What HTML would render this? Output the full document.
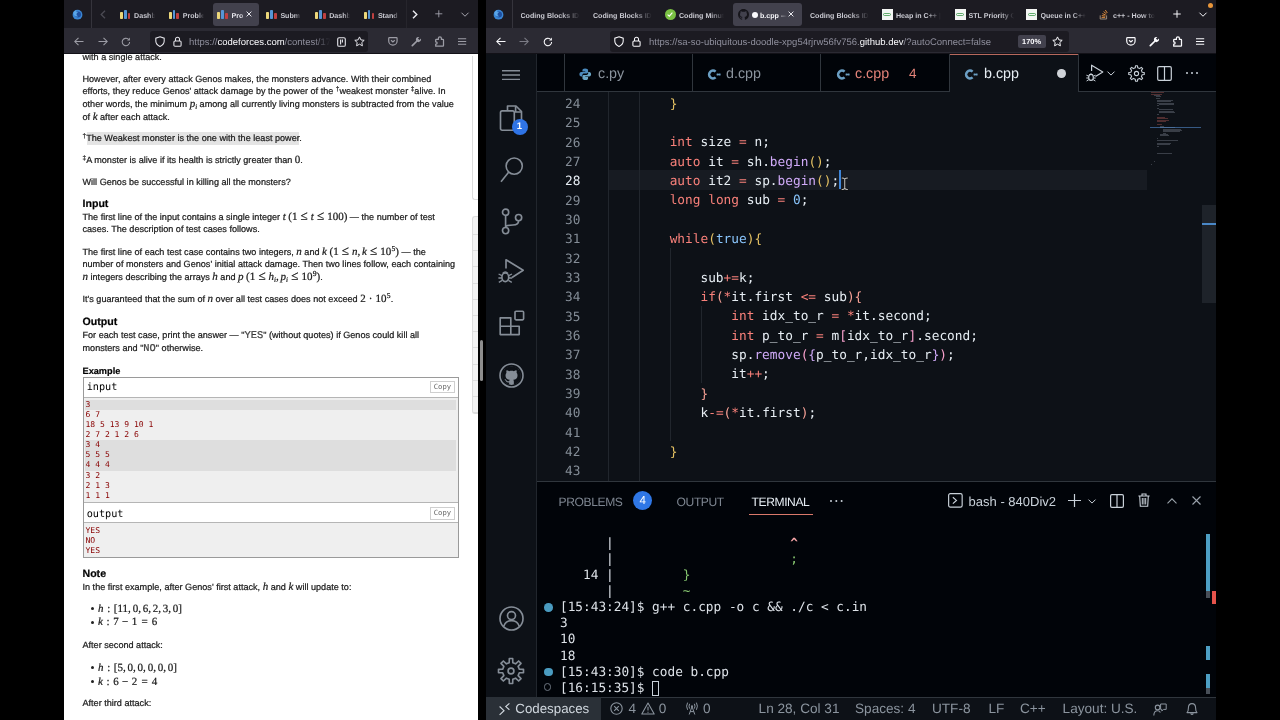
<!DOCTYPE html>
<html lang="en">
<head>
<meta charset="utf-8">
<title>Screen</title>
<style>
*{box-sizing:border-box;margin:0;padding:0;text-rendering:geometricPrecision}
html,body{width:1280px;height:720px;overflow:hidden;background:#000}
body{position:relative;font-family:"Liberation Sans",sans-serif;-webkit-font-smoothing:antialiased}
.abs{position:absolute}
svg{position:absolute;overflow:visible}
/* ---------- generic firefox chrome ---------- */
.win{position:absolute;top:0;height:720px;overflow:hidden;will-change:transform}
.tabbar{position:absolute;left:0;top:0;right:0;height:28px;background:#1c1b22}
.navbar{position:absolute;left:0;top:28px;right:0;height:26px;background:#2b2a33;border-bottom:1px solid #121117}
.tabtxt{position:absolute;top:9.9px;height:12px;line-height:12px;font-size:7.1px;font-weight:700;color:#c9c9d1;white-space:nowrap;overflow:hidden}
.fade{-webkit-mask-image:linear-gradient(90deg,#000 70%,transparent 100%);mask-image:linear-gradient(90deg,#000 70%,transparent 100%)}
.acttab{position:absolute;top:3px;height:23px;background:#42414d;border-radius:3px}
.urlbar{position:absolute;top:3px;height:20.5px;background:#1c1b22;border-radius:3px}
.urltxt{position:absolute;top:.8px;height:21px;line-height:21px;font-size:9.5px;color:#8f8f9d;white-space:nowrap;overflow:hidden}
.fade2{-webkit-mask-image:linear-gradient(90deg,#000 88%,transparent 100%);mask-image:linear-gradient(90deg,#000 88%,transparent 100%)}
.urltxt b{font-weight:400;color:#fbfbfe}
/* ---------- left page ---------- */
#lpage{position:absolute;left:0;top:54px;width:414px;height:666px;background:#fff;overflow:hidden;color:#222}
.ln{position:absolute;left:18.5px;height:13px;line-height:13px;font-size:9.1px;white-space:nowrap;color:#1a1a1a;-webkit-text-stroke:.22px #1a1a1a}
.ln i,.m{font-family:"Liberation Serif",serif;font-style:italic;font-size:11px}
.mr{font-family:"Liberation Serif",serif;font-size:11px}
.mr b.r{font-weight:400;margin:0 3.1px;font-size:13px;line-height:0}.mr b.c{margin-left:1.8px}.mr b.e{font-weight:400;margin:0 3.6px}.mr b.q{font-weight:400;margin:0 4.2px}.mr b.bn{font-weight:400;margin:0 3.4px}
u.bu{display:inline-block;width:3.2px;height:3.2px;border-radius:50%;background:#222;margin-right:3.6px;position:relative;top:-1.6px;text-decoration:none}.mr b.d{font-weight:400;margin:0 3.1px}
.mr sup.s{font-size:7.6px;top:-4px;margin-left:.3px}
.hd{font-weight:700;font-size:10.6px;color:#000}
.tt{font-family:"Liberation Mono",monospace;font-size:10.4px;color:#555}
sup.s{font-size:6.5px;vertical-align:baseline;position:relative;top:-3.5px}
sub.s{font-size:7px;vertical-align:baseline;position:relative;top:2px;font-family:"Liberation Serif",serif;font-style:italic}
.sm{font-family:"DejaVu Sans Mono","Liberation Mono",monospace;font-size:10.2px;line-height:14px;color:#000}
.cp{font-family:"DejaVu Sans Mono","Liberation Mono",monospace;font-size:7.2px;line-height:10.500px;height:12.300px;padding:0 2.600px;border:1px solid #cfcfcf;color:#666;background:#fff}
.io{font-family:"DejaVu Sans Mono","Liberation Mono",monospace;font-size:8.05px;line-height:10.05px;color:#880000}
/* ---------- vscode ---------- */
#vs{position:absolute;left:0;top:54px;width:730px;height:666px;background:#0d1117;overflow:hidden}
.code{font-family:"DejaVu Sans Mono","Liberation Mono",monospace;font-size:12.8px;white-space:pre;color:#e6edf3}
.cl{position:absolute;left:122px;height:19.33px;line-height:19.33px}
.lnum{position:absolute;left:40px;width:54.5px;text-align:right;height:19.33px;line-height:19.33px;color:#6e7681;font-family:"DejaVu Sans Mono","Liberation Mono",monospace;font-size:12.8px}
.k{color:#f8807a}.f{color:#d0aaf8}.n{color:#8ac6fd}
.b3{color:#e4c163}.b4{color:#f7a196}.b5{color:#f9a0cd}.b6{color:#d0aaf8}
.ui{font-family:"Liberation Sans",sans-serif;white-space:nowrap;position:absolute}
.tl{position:absolute;left:74px;height:16.1px;line-height:16.1px;font-family:"DejaVu Sans Mono","Liberation Mono",monospace;font-size:12.75px;white-space:pre;color:#dde2e8}
</style>
</head>
<body>

<!-- ================= LEFT WINDOW ================= -->
<div class="win" id="lw" style="left:64px;width:414px">
  <div class="tabbar">
<svg style="left:7.5px;top:8.5px" width="11" height="11" viewBox="0 0 11 11"><circle cx="5.500" cy="5.700" r="4.900" fill="#3a86d4"/><circle cx="6" cy="5.400" r="3" fill="#1f4f9f"/><path d="M1.400 3.400 Q2.400 1.200 4.800 .9 Q3.700 2 4.200 3.100 Q5.400 3 6.200 3.800 Q4.800 3.900 4.500 5 Q4.300 6.600 6 7.200 Q4 7.900 2.600 6.600 Q1 5.200 1.400 3.400Z" fill="#5aa6e8"/></svg>
<div class="abs" style="left:27px;top:0;width:1px;height:28px;background:#35343c"></div>
<svg style="left:36px;top:9.5px" width="6" height="9" viewBox="0 0 6 9"><path d="M5 .7 L1.200 4.500 L5 8.300" fill="none" stroke="#4b4a53" stroke-width="1.300"/></svg>
<div class="acttab" style="left:148.5px;width:46.5px"></div>
<div class="abs" style="left:55.9px;top:12.4px;width:3px;height:6.4px;background:#ecd77a;border-radius:.8px"></div><div class="abs" style="left:59.8px;top:10.4px;width:2.8px;height:8.4px;background:#5596d6;border-radius:.8px"></div><div class="abs" style="left:63.699999999999996px;top:13px;width:2.8px;height:5.8px;background:#bf4040;border-radius:.8px"></div>
<div class="tabtxt fade" style="left:70.1px;width:21px">Dashb</div>
<div class="abs" style="left:104.6px;top:12.4px;width:3px;height:6.4px;background:#ecd77a;border-radius:.8px"></div><div class="abs" style="left:108.5px;top:10.4px;width:2.8px;height:8.4px;background:#5596d6;border-radius:.8px"></div><div class="abs" style="left:112.39999999999999px;top:13px;width:2.8px;height:5.8px;background:#bf4040;border-radius:.8px"></div>
<div class="tabtxt fade" style="left:118.8px;width:21px">Proble</div>
<div class="abs" style="left:153.4px;top:12.4px;width:3px;height:6.4px;background:#ecd77a;border-radius:.8px"></div><div class="abs" style="left:157.3px;top:10.4px;width:2.8px;height:8.4px;background:#5596d6;border-radius:.8px"></div><div class="abs" style="left:161.20000000000002px;top:13px;width:2.8px;height:5.8px;background:#bf4040;border-radius:.8px"></div>
<div class="tabtxt fade" style="left:167.6px;width:13px;color:#e8e8ee">Pro</div>
<svg style="left:181.8px;top:11.2px" width="6" height="6" viewBox="0 0 6 6"><path d="M.6 .6 L5.4 5.4 M5.4 .6 L.6 5.4" stroke="#e8e8ee" stroke-width="1" fill="none"/></svg>
<div class="abs" style="left:202.2px;top:12.4px;width:3px;height:6.4px;background:#ecd77a;border-radius:.8px"></div><div class="abs" style="left:206.1px;top:10.4px;width:2.8px;height:8.4px;background:#5596d6;border-radius:.8px"></div><div class="abs" style="left:210.0px;top:13px;width:2.8px;height:5.8px;background:#bf4040;border-radius:.8px"></div>
<div class="tabtxt fade" style="left:216.39999999999998px;width:21px">Subm</div>
<div class="abs" style="left:251px;top:12.4px;width:3px;height:6.4px;background:#ecd77a;border-radius:.8px"></div><div class="abs" style="left:254.9px;top:10.4px;width:2.8px;height:8.4px;background:#5596d6;border-radius:.8px"></div><div class="abs" style="left:258.8px;top:13px;width:2.8px;height:5.8px;background:#bf4040;border-radius:.8px"></div>
<div class="tabtxt fade" style="left:265.2px;width:21px">Dashb</div>
<div class="abs" style="left:299.7px;top:12.4px;width:3px;height:6.4px;background:#ecd77a;border-radius:.8px"></div><div class="abs" style="left:303.59999999999997px;top:10.4px;width:2.8px;height:8.4px;background:#5596d6;border-radius:.8px"></div><div class="abs" style="left:307.5px;top:13px;width:2.8px;height:5.8px;background:#bf4040;border-radius:.8px"></div>
<div class="tabtxt fade" style="left:313.9px;width:21px">Stand</div>
<div class="abs" style="left:342px;top:0;width:1px;height:28px;background:#26252c"></div>
<svg style="left:348px;top:9.5px" width="6" height="9" viewBox="0 0 6 9"><path d="M1 .7 L4.800 4.500 L1 8.300" fill="none" stroke="#ececf2" stroke-width="1.400"/></svg>
<svg style="left:371.2px;top:10.200px" width="7.600" height="7.600" viewBox="0 0 9 9"><path d="M4.5 .3 V8.7 M.3 4.5 H8.7" fill="none" stroke="#a9a9b3" stroke-width="1"/></svg>
<svg style="left:397px;top:11.800px" width="8" height="5.300" viewBox="0 0 9 6"><path d="M.5 .8 L4.5 4.8 L8.5 .8" fill="none" stroke="#a9a9b3" stroke-width="1.1"/></svg>
</div>
  <div class="navbar">
<svg style="left:10px;top:9px" width="10" height="9" viewBox="0 0 10 9"><path d="M9.5 4.5 H1 M4.5 .8 L.8 4.5 L4.5 8.2" fill="none" stroke="#9d9da6" stroke-width="1.05"/></svg>
<svg style="left:33.5px;top:9px" width="10" height="9" viewBox="0 0 10 9"><path d="M.5 4.5 H9 M5.5 .8 L9.2 4.5 L5.5 8.2" fill="none" stroke="#9d9da6" stroke-width="1.05"/></svg>
<svg style="left:57px;top:8.5px" width="10" height="10" viewBox="0 0 10 10"><path d="M8.6 5 A3.7 3.7 0 1 1 7.3 2.2" fill="none" stroke="#9d9da6" stroke-width="1.05"/><path d="M8.9 .6 V3.4 H6.1Z" fill="#9d9da6"/></svg>
<div class="urlbar" style="left:85.5px;width:218px"><svg style="left:5px;top:5px" width="10" height="11" viewBox="0 0 10 11"><path d="M5 .7 L9.2 2.2 V5 Q9.2 8.6 5 10.4 Q.8 8.6 .8 5 V2.2Z" fill="none" stroke="#e6e6ec" stroke-width="1.05"/></svg><svg style="left:23.5px;top:4.5px" width="9" height="11" viewBox="0 0 9 11"><rect x=".9" y="4.9" width="7.2" height="5.4" rx="1.1" fill="none" stroke="#e6e6ec" stroke-width="1.05"/><path d="M2.5 4.9 V3.2 A2 2 0 0 1 6.5 3.2 V4.9" fill="none" stroke="#e6e6ec" stroke-width="1.05"/></svg><div class="urltxt fade2" style="left:39.5px;width:142px"><span>https://</span><b>codeforces.com</b>/contest/1786/problem</div><svg style="left:187.0px;top:5.5px" width="9" height="10" viewBox="0 0 9 10"><rect x=".7" y=".7" width="7.6" height="8.6" rx="1.4" fill="none" stroke="#e6e6ec" stroke-width="1.1"/><path d="M3.6 2.6 V7.4 M5.4 2.6 V5.6" stroke="#e6e6ec" stroke-width="1.1" fill="none"/></svg><svg style="left:204.0px;top:5px" width="11" height="11" viewBox="0 0 11 11"><path d="M5.5 .9 L6.9 3.9 L10.2 4.3 L7.8 6.5 L8.4 9.8 L5.5 8.2 L2.6 9.8 L3.2 6.5 L.8 4.3 L4.1 3.9Z" fill="none" stroke="#e6e6ec" stroke-width="1" stroke-linejoin="round"/></svg></div>
<svg style="left:324.1px;top:9px" width="9.800" height="8.900" viewBox="0 0 11 10"><path d="M1.6 .8 H9.4 Q10.2 .8 10.2 1.6 V4.4 A4.7 4.7 0 0 1 .8 4.4 V1.6 Q.8 .8 1.6 .8Z" fill="none" stroke="#9d9da6" stroke-width="1.350"/><path d="M3.4 3.6 L5.5 5.6 L7.6 3.6" fill="none" stroke="#9d9da6" stroke-width="1.350"/></svg>
<svg style="left:346.5px;top:8px" width="11" height="11" viewBox="0 0 11 11"><path d="M1.3 9.7 L6 5" stroke="#9d9da6" stroke-width="1.7" stroke-linecap="round" fill="none"/><path d="M9.9 2.6 L8.4 4.1 L6.9 2.6 L8.4 1.1 A2.6 2.6 0 1 0 9.9 2.6Z" fill="#9d9da6"/></svg>
<svg style="left:369.5px;top:6.600px" width="11" height="12" viewBox="0 0 11 12"><path d="M1.700 11.200 H8.900 Q9.500 11.200 9.500 10.600 V5 Q9.500 4.400 8.900 4.400 H7.400 V3.300 A1.500 1.500 0 0 0 4.400 3.300 V4.400 H2.300 Q1.700 4.400 1.700 5 V6.900 H2.100 A1.050 1.050 0 0 1 2.100 9 H1.700Z" fill="none" stroke="#9d9da6" stroke-width="1.250" stroke-linejoin="round"/></svg>
<svg style="left:393.9px;top:9.8px" width="8.200" height="7" viewBox="0 0 8.200 7"><path d="M0 .7 H8.200 M0 3.450 H8.200 M0 6.200 H8.200" stroke="#9d9da6" stroke-width="1.100" fill="none"/></svg>
</div>
  <div id="lpage">
<div class="ln" style="top:-3.00px">with a single attack.</div>
<div class="ln" style="top:18.50px">However, after every attack Genos makes, the monsters advance. With their combined</div>
<div class="ln" style="top:31.25px">efforts, they reduce Genos' attack damage by the power of the <sup class="s">†</sup>weakest monster <sup class="s">‡</sup>alive. In</div>
<div class="ln" style="top:44.00px">other words, the minimum <i>p</i><sub class="s">i</sub> among all currently living monsters is subtracted from the value</div>
<div class="ln" style="top:56.75px">of <i>k</i> after each attack.</div>
<div class="abs" style="left:23px;top:77.5px;width:212px;height:13px;background:#e4e4e4"></div>
<div class="ln" style="top:78.00px"><sup class="s">†</sup>The Weakest monster is the one with the least power.</div>
<div class="ln" style="top:100.00px"><sup class="s">‡</sup>A monster is alive if its health is strictly greater than <span class="mr">0</span>.</div>
<div class="ln" style="top:121.50px">Will Genos be successful in killing all the monsters?</div>
<div class="ln hd" style="top:143.50px">Input</div>
<div class="ln" style="top:156.50px">The first line of the input contains a single integer <i>t</i> <span class="mr" id="m1">(1<b class="r">≤</b><i>t</i><b class="r">≤</b>100)</span> — the number of test</div>
<div class="ln" style="top:169.25px">cases. The description of test cases follows.</div>
<div class="ln" style="top:191.50px">The first line of each test case contains two integers, <i>n</i> and <i>k</i> <span class="mr" id="m2">(1<b class="r">≤</b><i>n</i>,<b class="c"></b><i>k</i><b class="r">≤</b>10<sup class="s">5</sup>)</span> <span id="m2b">— the</span></div>
<div class="ln" style="top:204.25px">number of monsters and Genos' initial attack damage. Then two lines follow, each containing</div>
<div class="ln" style="top:217.00px"><i>n</i> integers describing the arrays <i>h</i> and <i>p</i> <span class="mr" id="m3">(1<b class="r">≤</b><i>h</i><sub class="s">i</sub>,<b class="c"></b><i>p</i><sub class="s">i</sub><b class="r">≤</b>10<sup class="s">9</sup>)</span>.</div>
<div class="ln" style="top:239.00px">It's guaranteed that the sum of <i>n</i> over all test cases does not exceed <span class="mr" id="m4">2<b class="d">·</b>10<sup class="s">5</sup></span>.</div>
<div class="ln hd" style="top:261.50px">Output</div>
<div class="ln" style="top:274.50px">For each test case, print the answer — <span id="q1">"<span class="tt">YES</span>"</span> <span id="q2">(without quotes) if Genos could kill all</span></div>
<div class="ln" style="top:287.90px">monsters and <span id="q3">"<span class="tt">NO</span>"</span> otherwise.</div>
<div class="ln hd" style="top:311.00px;font-size:9.2px">Example</div>
<!-- sample box -->
<div class="abs" style="left:18.5px;top:323px;width:376px;height:181px;border:1px solid #9a9a9a;background:#fff"></div>
<div class="abs" style="left:19.5px;top:342.7px;width:374px;height:106.6px;background:#efefef;border-top:1px solid #b5b5b5;border-bottom:1px solid #b5b5b5"></div>
<div class="abs" style="left:21px;top:345.5px;width:371px;height:10.2px;background:#dedede"></div>
<div class="abs" style="left:21px;top:386px;width:371px;height:30.5px;background:#dedede"></div>
<div class="abs" style="left:19.5px;top:467.5px;width:374px;height:35.5px;background:#efefef;border-top:1px solid #b5b5b5"></div>
<div class="abs sm" style="left:22.7px;top:327.3px">input</div>
<div class="abs sm" style="left:22.7px;top:453.8px">output</div>
<div class="abs cp" style="left:366.2px;top:327.2px">Copy</div>
<div class="abs cp" style="left:366.2px;top:453.4px">Copy</div>
<pre class="abs io" style="left:21.5px;top:346.2px">3
6 7
18 5 13 9 10 1
2 7 2 1 2 6
3 4
5 5 5
4 4 4
3 2
2 1 3
1 1 1</pre>
<pre class="abs io" style="left:21.5px;top:471.6px">YES
NO
YES</pre>
<div class="ln hd" style="top:514.00px">Note</div>
<div class="ln" style="top:526.50px">In the first example, after Genos' first attack, <i>h</i> and <i>k</i> will update to:</div>
<div class="ln" style="top:548.50px;left:27.3px"><u class="bu"></u><i>h</i><span class="mr" id="n1"><b class="e">:</b>[11,<b class="c"></b>0,<b class="c"></b>6,<b class="c"></b>2,<b class="c"></b>3,<b class="c"></b>0]</span></div>
<div class="ln" style="top:562.30px;left:27.3px"><u class="bu"></u><i>k</i><span class="mr" id="n2"><b class="e">:</b>7<b class="bn">−</b>1<b class="q">=</b>6</span></div>
<div class="ln" style="top:585.00px">After second attack:</div>
<div class="ln" style="top:607.50px;left:27.3px"><u class="bu"></u><i>h</i><span class="mr" id="n3"><b class="e">:</b>[5,<b class="c"></b>0,<b class="c"></b>0,<b class="c"></b>0,<b class="c"></b>0,<b class="c"></b>0]</span></div>
<div class="ln" style="top:621.50px;left:27.3px"><u class="bu"></u><i>k</i><span class="mr" id="n4"><b class="e">:</b>6<b class="bn">−</b>2<b class="q">=</b>4</span></div>
<div class="ln" style="top:643.00px">After third attack:</div>
<!-- right sidebar slivers -->
<div class="abs" style="left:407.5px;top:162px;width:7px;height:198px;background:#f3f3f3;border-left:1px solid #dcdcdc;border-top:1px solid #dcdcdc;border-bottom:1px solid #dcdcdc;border-radius:3px 0 0 3px"></div>
<div class="abs" style="left:408.5px;top:180.0px;width:6px;height:1px;background:#dcdcdc"></div>
<div class="abs" style="left:408.5px;top:196.2px;width:6px;height:1px;background:#dcdcdc"></div>
<div class="abs" style="left:408.5px;top:212.4px;width:6px;height:1px;background:#dcdcdc"></div>
<div class="abs" style="left:408.5px;top:228.6px;width:6px;height:1px;background:#dcdcdc"></div>
<div class="abs" style="left:408.5px;top:244.8px;width:6px;height:1px;background:#dcdcdc"></div>
<div class="abs" style="left:408.5px;top:261.0px;width:6px;height:1px;background:#dcdcdc"></div>
<div class="abs" style="left:408.5px;top:277.2px;width:6px;height:1px;background:#dcdcdc"></div>
<div class="abs" style="left:408.5px;top:293.4px;width:6px;height:1px;background:#dcdcdc"></div>
<div class="abs" style="left:408.5px;top:309.6px;width:6px;height:1px;background:#dcdcdc"></div>
<div class="abs" style="left:408.5px;top:325.8px;width:6px;height:1px;background:#dcdcdc"></div>
<div class="abs" style="left:408.5px;top:342.0px;width:6px;height:1px;background:#dcdcdc"></div>
<div class="abs" style="left:408.5px;top:358.2px;width:6px;height:1px;background:#dcdcdc"></div>
<div class="abs" style="left:407.5px;top:2px;width:7px;height:144px;border-left:1px solid #dcdcdc;border-bottom:1px solid #dcdcdc;border-radius:0 0 0 3px"></div>
</div>
</div>

<div class="abs" style="left:480.2px;top:339.5px;width:2.800px;height:41px;border-radius:1.500px;background:#8e8e8e"></div>
<!-- ================= RIGHT WINDOW ================= -->
<div class="win" id="rw" style="left:486px;width:730px">
  <div class="tabbar">
<svg style="left:6.5px;top:8.5px" width="11" height="11" viewBox="0 0 11 11"><circle cx="5.500" cy="5.700" r="4.900" fill="#3a86d4"/><circle cx="6" cy="5.400" r="3" fill="#1f4f9f"/><path d="M1.400 3.400 Q2.400 1.200 4.800 .9 Q3.700 2 4.200 3.100 Q5.400 3 6.200 3.800 Q4.800 3.900 4.500 5 Q4.300 6.600 6 7.200 Q4 7.900 2.600 6.600 Q1 5.200 1.400 3.400Z" fill="#5aa6e8"/></svg>
<div class="abs" style="left:26px;top:0;width:1px;height:28px;background:#35343c"></div>
<div class="acttab" style="left:246.5px;width:69.5px"></div>
<div class="tabtxt fade" style="left:34.5px;width:59px">Coding Blocks IDE</div>
<div class="tabtxt fade" style="left:107px;width:59px">Coding Blocks IDE</div>
<div class="abs" style="left:178.5px;top:9px;width:11px;height:11px;border-radius:50%;background:#7ac143"></div><svg style="left:181px;top:11.8px" width="6" height="5" viewBox="0 0 6 5"><path d="M.6 2.6 L2.3 4.2 L5.4 .7" fill="none" stroke="#fff" stroke-width="1.1"/></svg>
<div class="tabtxt fade" style="left:193px;width:45px">Coding Minutes</div>
<svg style="left:251.5px;top:9px" width="11" height="11" viewBox="0 0 16 16"><path fill="#16151b" d="M8 0C3.58 0 0 3.58 0 8c0 3.54 2.29 6.53 5.47 7.59.4.07.55-.17.55-.38 0-.19-.01-.82-.01-1.49-2.01.37-2.53-.49-2.69-.94-.09-.23-.48-.94-.82-1.13-.28-.15-.68-.52-.01-.53.63-.01 1.08.58 1.23.82.72 1.21 1.87.87 2.33.66.07-.52.28-.87.51-1.07-1.78-.2-3.64-.89-3.64-3.95 0-.87.31-1.59.82-2.15-.08-.2-.36-1.02.08-2.12 0 0 .67-.21 2.2.82.64-.18 1.32-.27 2-.27s1.36.09 2 .27c1.53-1.04 2.2-.82 2.2-.82.44 1.1.16 1.92.08 2.12.51.56.82 1.27.82 2.15 0 3.07-1.87 3.75-3.65 3.95.29.25.54.73.54 1.48 0 1.07-.01 1.93-.01 2.2 0 .21.15.46.55.38A8.01 8.01 0 0 0 16 8c0-4.42-3.58-8-8-8Z"/></svg>
<div class="abs" style="left:266px;top:11.5px;width:6px;height:6px;border-radius:50%;background:#fbfbfe"></div>
<div class="tabtxt fade" style="left:274px;width:27px;color:#f4f4f8">b.cpp — 840</div>
<svg style="left:302px;top:11.2px" width="6" height="6" viewBox="0 0 6 6"><path d="M.6 .6 L5.4 5.4 M5.4 .6 L.6 5.4" stroke="#e8e8ee" stroke-width="1" fill="none"/></svg>
<div class="tabtxt fade" style="left:324px;width:59px">Coding Blocks IDE</div>
<div class="abs" style="left:395.5px;top:9px;width:11px;height:11px;background:#f4f6f4"></div><div class="abs" style="left:397.0px;top:12.5px;width:8px;height:3.5px;border:1px solid #3c9a4b;border-radius:2px;opacity:.8"></div>
<div class="tabtxt fade" style="left:410px;width:45px">Heap in C++ |</div>
<div class="abs" style="left:468.5px;top:9px;width:11px;height:11px;background:#f4f6f4"></div><div class="abs" style="left:470.0px;top:12.5px;width:8px;height:3.5px;border:1px solid #3c9a4b;border-radius:2px;opacity:.8"></div>
<div class="tabtxt fade" style="left:482.5px;width:45px">STL Priority Q</div>
<div class="abs" style="left:540px;top:9px;width:11px;height:11px;background:#f4f6f4"></div><div class="abs" style="left:541.5px;top:12.5px;width:8px;height:3.5px;border:1px solid #3c9a4b;border-radius:2px;opacity:.8"></div>
<div class="tabtxt fade" style="left:554.5px;width:45px">Queue in C++</div>
<svg style="left:613px;top:9px" width="10" height="11" viewBox="0 0 10 11"><path d="M1.2 6.4 V10 H7.6 V6.4" fill="none" stroke="#9a8b7b" stroke-width="1"/><path d="M2.6 8.4 H6.2 M2.8 6.6 L6.3 7.2 M3.4 4.6 L6.7 6 M4.6 2.6 L7.4 4.8 M6.3 1 L8.3 4" stroke="#d98a3d" stroke-width="1" fill="none"/></svg>
<div class="tabtxt fade" style="left:627px;width:42px">c++ - How to</div>
<svg style="left:687px;top:10px" width="8" height="8" viewBox="0 0 9 9"><path d="M4.5 .3 V8.7 M.3 4.5 H8.7" fill="none" stroke="#fbfbfe" stroke-width="1.1"/></svg>
<svg style="left:713px;top:11.800px" width="8" height="5.300" viewBox="0 0 9 6"><path d="M.5 .8 L4.5 4.8 L8.5 .8" fill="none" stroke="#fbfbfe" stroke-width="1.1"/></svg>
<div class="abs" style="left:722px;top:3px;width:5px;height:5px;border-radius:50%;background:#e8963a"></div>
</div>
  <div class="navbar">
<svg style="left:9.5px;top:9px" width="10" height="9" viewBox="0 0 10 9"><path d="M9.5 4.5 H1 M4.5 .8 L.8 4.5 L4.5 8.2" fill="none" stroke="#fbfbfe" stroke-width="1.05"/></svg>
<svg style="left:32.5px;top:9px" width="10" height="9" viewBox="0 0 10 9"><path d="M.5 4.5 H9 M5.5 .8 L9.2 4.5 L5.5 8.2" fill="none" stroke="#7c7c86" stroke-width="1.05"/></svg>
<svg style="left:56.5px;top:8.5px" width="10" height="10" viewBox="0 0 10 10"><path d="M8.6 5 A3.7 3.7 0 1 1 7.3 2.2" fill="none" stroke="#fbfbfe" stroke-width="1.05"/><path d="M8.9 .6 V3.4 H6.1Z" fill="#fbfbfe"/></svg>
<div class="urlbar" style="left:123.5px;width:459px"><svg style="left:4.5px;top:5px" width="10" height="11" viewBox="0 0 10 11"><path d="M5 .7 L9.2 2.2 V5 Q9.2 8.6 5 10.4 Q.8 8.6 .8 5 V2.2Z" fill="none" stroke="#fbfbfe" stroke-width="1.05"/></svg><svg style="left:22.5px;top:4.5px" width="9" height="11" viewBox="0 0 9 11"><rect x=".9" y="4.9" width="7.2" height="5.4" rx="1.1" fill="none" stroke="#fbfbfe" stroke-width="1.05"/><path d="M2.5 4.9 V3.2 A2 2 0 0 1 6.5 3.2 V4.9" fill="none" stroke="#fbfbfe" stroke-width="1.05"/></svg><div class="urltxt" style="left:39.5px;width:360px"><span>https://</span>sa-so-ubiquitous-doodle-xpg54rjrw56fv756.<b>github.dev</b>/?autoConnect=false</div><div class="abs" style="left:408px;top:3.5px;width:28px;height:13.5px;border-radius:2px;background:#42414d;color:#fbfbfe;font-size:7.4px;line-height:13.5px;text-align:center;font-weight:700">170%</div><svg style="left:442.5px;top:5px" width="11" height="11" viewBox="0 0 11 11"><path d="M5.5 .9 L6.9 3.9 L10.2 4.3 L7.8 6.5 L8.4 9.8 L5.5 8.2 L2.6 9.8 L3.2 6.5 L.8 4.3 L4.1 3.9Z" fill="none" stroke="#fbfbfe" stroke-width="1" stroke-linejoin="round"/></svg></div>
<svg style="left:640.1px;top:9px" width="9.800" height="8.900" viewBox="0 0 11 10"><path d="M1.6 .8 H9.4 Q10.2 .8 10.2 1.6 V4.4 A4.7 4.7 0 0 1 .8 4.4 V1.6 Q.8 .8 1.6 .8Z" fill="none" stroke="#fbfbfe" stroke-width="1.350"/><path d="M3.4 3.6 L5.5 5.6 L7.6 3.6" fill="none" stroke="#fbfbfe" stroke-width="1.350"/></svg>
<svg style="left:662.5px;top:8px" width="11" height="11" viewBox="0 0 11 11"><path d="M1.3 9.7 L6 5" stroke="#fbfbfe" stroke-width="1.7" stroke-linecap="round" fill="none"/><path d="M9.9 2.6 L8.4 4.1 L6.9 2.6 L8.4 1.1 A2.6 2.6 0 1 0 9.9 2.6Z" fill="#fbfbfe"/></svg>
<svg style="left:685.5px;top:6.600px" width="11" height="12" viewBox="0 0 11 12"><path d="M1.700 11.200 H8.900 Q9.500 11.200 9.500 10.600 V5 Q9.500 4.400 8.900 4.400 H7.400 V3.300 A1.500 1.500 0 0 0 4.400 3.300 V4.400 H2.300 Q1.700 4.400 1.700 5 V6.900 H2.100 A1.050 1.050 0 0 1 2.100 9 H1.700Z" fill="none" stroke="#fbfbfe" stroke-width="1.250" stroke-linejoin="round"/></svg>
<svg style="left:709.9px;top:9.8px" width="8.200" height="7" viewBox="0 0 8.200 7"><path d="M0 .7 H8.200 M0 3.450 H8.200 M0 6.200 H8.200" stroke="#fbfbfe" stroke-width="1.100" fill="none"/></svg>
</div>
  <div id="vs">
<!--EDITOR-->
<div class="abs" style="left:0;top:0;width:51px;height:643px;background:#0d1117;border-right:1px solid #21262d"></div>
<div class="abs" style="left:51px;top:0;width:679px;height:38px;background:#010409;border-bottom:1px solid #30363d"></div>
<div class="abs" style="left:77.5px;top:0;width:1px;height:37px;background:#30363d"></div>
<div class="abs" style="left:205.5px;top:0;width:1px;height:37px;background:#30363d"></div>
<div class="abs" style="left:334px;top:0;width:1px;height:37px;background:#30363d"></div>
<div class="abs" style="left:462.5px;top:0;width:1px;height:37px;background:#30363d"></div>
<div class="abs" style="left:463.5px;top:0;width:128px;height:38px;background:#0d1117;border-top:1px solid #b8695d"></div>
<div class="abs" style="left:591.5px;top:0;width:1px;height:37px;background:#30363d"></div>
<div class="ui" style="left:112px;top:10.4px;height:20px;line-height:20px;font-size:14.3px;color:#8b949e">c.py</div>
<div class="ui" style="left:240px;top:10.4px;height:20px;line-height:20px;font-size:14.3px;color:#8b949e">d.cpp</div>
<div class="ui" style="left:369px;top:10.4px;height:20px;line-height:20px;font-size:14.3px;color:#e5847a">c.cpp</div>
<div class="ui" style="left:423px;top:10.4px;height:20px;line-height:20px;font-size:13.5px;color:#e5847a">4</div>
<div class="ui" style="left:498px;top:10.4px;height:20px;line-height:20px;font-size:14.3px;color:#e6edf3">b.cpp</div>
<div class="abs" style="left:571.2px;top:15.3px;width:8.800px;height:8.800px;border-radius:50%;background:#d0d4d9"></div>
<div class="abs" style="left:122px;top:116.32px;width:539px;height:19.33px;background:#171b22"></div>
<div class="abs" style="left:122px;top:38px;width:1px;height:389px;background:#21262d"></div>
<div class="abs" style="left:153px;top:38px;width:1px;height:389px;background:#21262d"></div>
<div class="abs" style="left:184px;top:193.64px;width:1px;height:193.30px;background:#21262d"></div>
<div class="abs" style="left:215px;top:251.63px;width:1px;height:77.32px;background:#21262d"></div>
<div class="lnum" style="top:41.10px;color:#848d97">24</div>
<div class="cl code" style="top:40.70px">        <span class="b3">}</span></div>
<div class="lnum" style="top:60.43px;color:#848d97">25</div>
<div class="lnum" style="top:79.76px;color:#848d97">26</div>
<div class="cl code" style="top:79.36px">        <span class="k">int</span> size <span class="k">=</span> n;</div>
<div class="lnum" style="top:99.09px;color:#848d97">27</div>
<div class="cl code" style="top:98.69px">        <span class="k">auto</span> it <span class="k">=</span> sh.<span class="f">begin</span><span class="b3">()</span>;</div>
<div class="lnum" style="top:118.42px;color:#e6edf3">28</div>
<div class="cl code" style="top:118.02px">        <span class="k">auto</span> it2 <span class="k">=</span> sp.<span class="f">begin</span><span class="b3">()</span>;</div>
<div class="lnum" style="top:137.75px;color:#848d97">29</div>
<div class="cl code" style="top:137.35px">        <span class="k">long</span> <span class="k">long</span> sub <span class="k">=</span> <span class="n">0</span>;</div>
<div class="lnum" style="top:157.08px;color:#848d97">30</div>
<div class="lnum" style="top:176.41px;color:#848d97">31</div>
<div class="cl code" style="top:176.01px">        <span class="k">while</span><span class="b3">(</span><span class="n">true</span><span class="b3">){</span></div>
<div class="lnum" style="top:195.74px;color:#848d97">32</div>
<div class="lnum" style="top:215.07px;color:#848d97">33</div>
<div class="cl code" style="top:214.67px">            sub<span class="k">+=</span>k;</div>
<div class="lnum" style="top:234.40px;color:#848d97">34</div>
<div class="cl code" style="top:234.00px">            <span class="k">if</span><span class="b4">(</span><span class="k">*</span>it.first <span class="k">&lt;=</span> sub<span class="b4">){</span></div>
<div class="lnum" style="top:253.73px;color:#848d97">35</div>
<div class="cl code" style="top:253.33px">                <span class="k">int</span> idx_to_r <span class="k">=</span> <span class="k">*</span>it.second;</div>
<div class="lnum" style="top:273.06px;color:#848d97">36</div>
<div class="cl code" style="top:272.66px">                <span class="k">int</span> p_to_r <span class="k">=</span> m<span class="b5">[</span>idx_to_r<span class="b5">]</span>.second;</div>
<div class="lnum" style="top:292.39px;color:#848d97">37</div>
<div class="cl code" style="top:291.99px">                sp.<span class="f">remove</span><span class="b5">(</span><span class="b6">{</span>p_to_r,idx_to_r<span class="b6">}</span><span class="b5">)</span>;</div>
<div class="lnum" style="top:311.72px;color:#848d97">38</div>
<div class="cl code" style="top:311.32px">                it<span class="k">++</span>;</div>
<div class="lnum" style="top:331.05px;color:#848d97">39</div>
<div class="cl code" style="top:330.65px">            <span class="b4">}</span></div>
<div class="lnum" style="top:350.38px;color:#848d97">40</div>
<div class="cl code" style="top:349.98px">            k<span class="k">-=</span><span class="b4">(</span><span class="k">*</span>it.first<span class="b4">)</span>;</div>
<div class="lnum" style="top:369.71px;color:#848d97">41</div>
<div class="lnum" style="top:389.04px;color:#848d97">42</div>
<div class="cl code" style="top:388.64px">        <span class="b3">}</span></div>
<div class="lnum" style="top:408.37px;color:#848d97">43</div>
<div class="abs" style="left:353.3px;top:116.2px;width:1.600px;height:19.300px;background:#3f86d9"></div>
<div class="abs" style="left:664.5px;top:38.3px;width:13.0px;height:1.1px;background:rgba(255,123,114,.28)"></div>
<div class="abs" style="left:664.5px;top:39.6px;width:11.0px;height:1.1px;background:rgba(255,123,114,.28)"></div>
<div class="abs" style="left:667.5px;top:40.9px;width:6.0px;height:1.1px;background:rgba(160,170,182,.30)"></div>
<div class="abs" style="left:669.5px;top:42.2px;width:5.0px;height:1.1px;background:rgba(160,170,182,.30)"></div>
<div class="abs" style="left:669.5px;top:43.5px;width:4.0px;height:1.1px;background:rgba(160,170,182,.30)"></div>
<div class="abs" style="left:670.5px;top:46.1px;width:16.0px;height:1.1px;background:rgba(160,170,182,.30)"></div>
<div class="abs" style="left:670.5px;top:47.4px;width:14.0px;height:1.1px;background:rgba(160,170,182,.30)"></div>
<div class="abs" style="left:670.5px;top:48.7px;width:17.0px;height:1.1px;background:rgba(160,170,182,.30)"></div>
<div class="abs" style="left:672.5px;top:50.0px;width:15.0px;height:1.1px;background:rgba(160,170,182,.30)"></div>
<div class="abs" style="left:670.5px;top:51.3px;width:2.0px;height:1.1px;background:rgba(160,170,182,.30)"></div>
<div class="abs" style="left:670.5px;top:53.9px;width:2.0px;height:1.1px;background:rgba(160,170,182,.30)"></div>
<div class="abs" style="left:672.5px;top:55.2px;width:14.0px;height:1.1px;background:rgba(160,170,182,.30)"></div>
<div class="abs" style="left:672.5px;top:56.5px;width:15.0px;height:1.1px;background:rgba(160,170,182,.30)"></div>
<div class="abs" style="left:672.5px;top:57.8px;width:16.0px;height:1.1px;background:rgba(160,170,182,.30)"></div>
<div class="abs" style="left:670.5px;top:60.4px;width:2.0px;height:1.1px;background:rgba(160,170,182,.30)"></div>
<div class="abs" style="left:670.5px;top:63.0px;width:8.0px;height:1.1px;background:rgba(255,123,114,.28)"></div>
<div class="abs" style="left:670.5px;top:64.3px;width:11.0px;height:1.1px;background:rgba(255,123,114,.28)"></div>
<div class="abs" style="left:670.5px;top:65.6px;width:12.0px;height:1.1px;background:rgba(255,123,114,.28)"></div>
<div class="abs" style="left:670.5px;top:66.9px;width:9.0px;height:1.1px;background:rgba(255,123,114,.28)"></div>
<div class="abs" style="left:670.5px;top:69.5px;width:5.0px;height:1.1px;background:rgba(255,123,114,.28)"></div>
<div class="abs" style="left:673.5px;top:72.1px;width:4.0px;height:1.1px;background:rgba(160,170,182,.30)"></div>
<div class="abs" style="left:673.5px;top:73.4px;width:15.0px;height:1.1px;background:rgba(160,170,182,.30)"></div>
<div class="abs" style="left:676.5px;top:74.7px;width:18.0px;height:1.1px;background:rgba(160,170,182,.30)"></div>
<div class="abs" style="left:676.5px;top:76.0px;width:19.0px;height:1.1px;background:rgba(160,170,182,.30)"></div>
<div class="abs" style="left:676.5px;top:77.3px;width:17.0px;height:1.1px;background:rgba(160,170,182,.30)"></div>
<div class="abs" style="left:676.5px;top:78.6px;width:3.0px;height:1.1px;background:rgba(160,170,182,.30)"></div>
<div class="abs" style="left:673.5px;top:79.9px;width:8.0px;height:1.1px;background:rgba(160,170,182,.30)"></div>
<div class="abs" style="left:673.5px;top:81.2px;width:9.0px;height:1.1px;background:rgba(160,170,182,.30)"></div>
<div class="abs" style="left:670.5px;top:83.8px;width:1.0px;height:1.1px;background:rgba(160,170,182,.30)"></div>
<div class="abs" style="left:670.5px;top:86.4px;width:21.0px;height:1.1px;background:rgba(160,170,182,.30)"></div>
<div class="abs" style="left:670.5px;top:89.0px;width:14.0px;height:1.1px;background:rgba(160,170,182,.30)"></div>
<div class="abs" style="left:670.5px;top:90.3px;width:13.0px;height:1.1px;background:rgba(160,170,182,.30)"></div>
<div class="abs" style="left:670.5px;top:91.6px;width:2.0px;height:1.1px;background:rgba(160,170,182,.30)"></div>
<div class="abs" style="left:670.5px;top:99.4px;width:15.0px;height:1.1px;background:rgba(160,170,182,.30)"></div>
<div class="abs" style="left:667.5px;top:107.2px;width:1.0px;height:1.1px;background:rgba(160,170,182,.30)"></div>
<div class="abs" style="left:664.5px;top:109.8px;width:1.0px;height:1.1px;background:rgba(160,170,182,.30)"></div>
<div class="abs" style="left:664px;top:73.2px;width:51px;height:1px;background:rgba(90,150,220,.55)"></div>
<div class="abs" style="left:716px;top:151px;width:14px;height:98px;background:#1e232a"></div>
<div class="abs" style="left:716px;top:169.3px;width:14px;height:1.6px;background:#4a88c7"></div>
<svg style="left:355.3px;top:123.3px" width="7.500" height="13.400" viewBox="0 0 8 15"><path d="M1 1 Q3 1 4 2.200 Q5 1 7 1 M4 2.200 V12.800 M1 14 Q3 14 4 12.800 Q5 14 7 14" fill="none" stroke="#111" stroke-width="2.600" stroke-linecap="round"/><path d="M1 1 Q3 1 4 2.200 Q5 1 7 1 M4 2.200 V12.800 M1 14 Q3 14 4 12.800 Q5 14 7 14" fill="none" stroke="#c4c4c4" stroke-width="1.150" stroke-linecap="round"/></svg>
<!--/EDITOR-->
<!--PANEL-->
<div class="abs" style="left:51px;top:427px;width:679px;height:216px;background:#010409;border-top:1px solid #30363d"></div>
<div class="ui" style="left:72.6px;top:438.2px;height:20px;line-height:20px;font-size:12.1px;color:#7d8590;letter-spacing:-.42px">PROBLEMS</div>
<div class="abs" style="left:147.1px;top:437.1px;width:19.4px;height:19.4px;border-radius:50%;background:#2f77e6"></div>
<div class="ui" style="left:153.5px;top:437px;height:20px;line-height:20px;font-size:11.5px;color:#fff;">4</div>
<div class="ui" style="left:190.6px;top:438.2px;height:20px;line-height:20px;font-size:12.1px;color:#7d8590;letter-spacing:-.42px">OUTPUT</div>
<div class="ui" style="left:265.6px;top:438.2px;height:20px;line-height:20px;font-size:12.1px;color:#e6edf3;letter-spacing:-.42px">TERMINAL</div>
<div class="abs" style="left:263px;top:460.2px;width:64px;height:1.2px;background:#d9786a"></div>
<div class="abs" style="left:344.2px;top:445.6px;width:2.200px;height:2.200px;border-radius:50%;background:#c9d1d9;box-shadow:5.300px 0 0 #c9d1d9,10.600px 0 0 #c9d1d9"></div>
<div class="ui" style="left:482.6px;top:437.8px;height:20px;line-height:20px;font-size:13px;color:#c9d1d9">bash - 840Div2</div>
<div class="tl" style="top:481.85px;left:74px">      |                       <span style="color:#f7a6a8;font-weight:700">^</span></div>
<div class="tl" style="top:497.95px;left:74px">      |                       <span style="color:#86c670">;</span></div>
<div class="tl" style="top:514.05px;left:74px">   14 |         <span style="color:#86c670">}</span></div>
<div class="tl" style="top:530.15px;left:74px">      |         <span style="color:#86c670">~</span></div>
<div class="tl" style="top:546.25px;left:74px">[15:43:24]$ g++ c.cpp -o c &amp;&amp; ./c &lt; c.in</div>
<div class="tl" style="top:562.35px;left:74px">3</div>
<div class="tl" style="top:578.45px;left:74px">10</div>
<div class="tl" style="top:594.55px;left:74px">18</div>
<div class="tl" style="top:610.65px;left:74px">[15:43:30]$ code b.cpp</div>
<div class="tl" style="top:626.75px;left:74px">[16:15:35]$ </div>
<div class="abs" style="left:166.1px;top:627.2px;width:7.2px;height:14.5px;border:1px solid #c9d1d9"></div>
<div class="abs" style="left:57.5px;top:548.7px;width:8.6px;height:8.6px;margin-left:.6px;margin-top:.7px;border-radius:50%;background:#4a9bc0"></div>
<div class="abs" style="left:57.5px;top:613.1px;width:8.6px;height:8.6px;margin-left:.6px;margin-top:.7px;border-radius:50%;background:#4a9bc0"></div>
<div class="abs" style="left:57.8px;top:629.4px;width:7.4px;height:7.4px;border-radius:50%;border:1px solid #6e7681"></div>
<div class="abs" style="left:719.5px;top:480px;width:4px;height:57px;background:#4d9fc4"></div>
<div class="abs" style="left:719.5px;top:537px;width:4px;height:7px;background:#484f58"></div>
<div class="abs" style="left:726px;top:537px;width:3.5px;height:13px;background:#e5534b"></div>
<div class="abs" style="left:719.5px;top:592px;width:4px;height:14px;background:#4d9fc4"></div>
<div class="abs" style="left:719.5px;top:620px;width:4px;height:14px;background:#4d9fc4"></div>
<div class="abs" style="left:719.5px;top:634px;width:4px;height:6px;background:#484f58"></div>
<div class="abs" style="left:0;top:643px;width:730px;height:23px;background:#0d1117;border-top:1px solid #30363d"></div>
<div class="abs" style="left:0;top:643px;width:115px;height:23px;background:#2a3037"></div>
<div class="ui" style="left:29.3px;top:645px;height:20px;line-height:20px;font-size:13.3px;color:#d0d7de">Codespaces</div>
<div class="ui" style="left:142.6px;top:645px;height:20px;line-height:20px;font-size:13.6px;color:#8b949e">4</div>
<div class="ui" style="left:172.8px;top:645px;height:20px;line-height:20px;font-size:13.6px;color:#8b949e">0</div>
<div class="ui" style="left:217px;top:645px;height:20px;line-height:20px;font-size:13.6px;color:#8b949e">0</div>
<div class="ui" style="left:272.6px;top:645px;height:20px;line-height:20px;font-size:13.6px;color:#8b949e">Ln 28, Col 31</div>
<div class="ui" style="left:369px;top:645px;height:20px;line-height:20px;font-size:13.6px;color:#8b949e">Spaces: 4</div>
<div class="ui" style="left:446px;top:645px;height:20px;line-height:20px;font-size:13.6px;color:#8b949e">UTF-8</div>
<div class="ui" style="left:502.4px;top:645px;height:20px;line-height:20px;font-size:13.6px;color:#8b949e">LF</div>
<div class="ui" style="left:534px;top:645px;height:20px;line-height:20px;font-size:13.6px;color:#8b949e">C++</div>
<div class="ui" style="left:576.6px;top:645px;height:20px;line-height:20px;font-size:13.6px;color:#8b949e">Layout: U.S.</div>
<!--/PANEL-->
<!--ICONS-->
<svg style="left:16.4px;top:15.5px" width="18" height="10" viewBox="0 0 18 10"><path d="M0 .7 H18 M0 5 H18 M0 9.300 H18" stroke="#858d97" stroke-width="1.350" fill="none"/></svg>
<svg style="left:13px;top:50px" width="24" height="28" viewBox="0 0 24 28"><path d="M8.5 6.5 V2 H17 L22.5 7.5 V20.5 H15.5" fill="none" stroke="#858d97" stroke-width="1.650" stroke-linejoin="round"/><path d="M16.6 2.2 V8 H22.3" fill="none" stroke="#858d97" stroke-width="1.650"/><path d="M1.5 8.5 Q1.5 6.8 3.2 6.8 H13.6 Q15.3 6.8 15.3 8.5 V24.5 Q15.3 26.2 13.6 26.2 H3.2 Q1.5 26.2 1.5 24.5Z" fill="none" stroke="#858d97" stroke-width="1.650"/></svg>
<div class="abs" style="left:25.5px;top:65px;width:16px;height:16px;border-radius:50%;background:#2f74e6;color:#fff;font-size:9.5px;line-height:16px;text-align:center;font-weight:700">1</div>
<svg style="left:13.5px;top:102px" width="25" height="27" viewBox="0 0 25 27"><circle cx="14.200" cy="10.100" r="8.100" fill="none" stroke="#858d97" stroke-width="1.600"/><path d="M8.600 16.200 L1 25.800" stroke="#858d97" stroke-width="1.600" fill="none"/></svg>
<svg style="left:15.3px;top:154px" width="22" height="27" viewBox="0 0 22 27"><circle cx="4.6" cy="4.2" r="3.1" fill="none" stroke="#858d97" stroke-width="1.650"/><circle cx="4.6" cy="22.6" r="3.1" fill="none" stroke="#858d97" stroke-width="1.650"/><circle cx="17.6" cy="9.6" r="3.1" fill="none" stroke="#858d97" stroke-width="1.650"/><path d="M4.6 7.4 V19.4 M17.6 12.8 Q17.6 17 12 17 Q4.6 17 4.6 19.4" fill="none" stroke="#858d97" stroke-width="1.650"/></svg>
<svg style="left:12px;top:204px" width="27" height="27" viewBox="0 0 27 27"><path d="M8 10.5 V1.8 L25.2 12.3 L14 19.5" fill="none" stroke="#858d97" stroke-width="1.650" stroke-linejoin="round"/><ellipse cx="7.3" cy="19.3" rx="3.4" ry="4.3" fill="none" stroke="#858d97" stroke-width="1.650"/><path d="M4.6 15.4 Q7.3 12.6 10 15.4 M.6 16 L3.9 17.6 M.4 20 H3.8 M.8 24.4 L4.2 22.4 M14 16 L10.7 17.6 M14.2 20 H10.8 M13.8 24.4 L10.4 22.4" fill="none" stroke="#858d97" stroke-width="1.3"/></svg>
<svg style="left:13px;top:256px" width="26" height="26" viewBox="0 0 26 26"><path d="M1.2 7.8 H11.8 V24.6 H1.2Z M1.2 16.2 H20.2 V24.6 H11.8 M11.8 16.2 H20.2 V24.6" fill="none" stroke="#858d97" stroke-width="1.650" stroke-linejoin="round"/><rect x="16" y="1.2" width="8.6" height="8.6" rx="1" fill="none" stroke="#858d97" stroke-width="1.650"/></svg>
<svg style="left:12.5px;top:308.5px" width="25" height="25" viewBox="0 0 25 25"><circle cx="12.5" cy="12.7" r="9.2" fill="#858d97"/><g transform="translate(3.1,3.3) scale(1.175)"><path fill="#0d1117" d="M8 0C3.58 0 0 3.58 0 8c0 3.54 2.29 6.53 5.47 7.59.4.07.55-.17.55-.38 0-.19-.01-.82-.01-1.49-2.01.37-2.53-.49-2.69-.94-.09-.23-.48-.94-.82-1.13-.28-.15-.68-.52-.01-.53.63-.01 1.08.58 1.23.82.72 1.21 1.87.87 2.33.66.07-.52.28-.87.51-1.07-1.78-.2-3.64-.89-3.64-3.95 0-.87.31-1.59.82-2.15-.08-.2-.36-1.02.08-2.12 0 0 .67-.21 2.2.82.64-.18 1.32-.27 2-.27s1.36.09 2 .27c1.53-1.04 2.2-.82 2.2-.82.44 1.1.16 1.92.08 2.12.51.56.82 1.27.82 2.15 0 3.07-1.87 3.75-3.65 3.95.29.25.54.73.54 1.48 0 1.07-.01 1.93-.01 2.2 0 .21.15.46.55.38A8.01 8.01 0 0 0 16 8c0-4.42-3.58-8-8-8Z"/></g><circle cx="12.5" cy="12.5" r="11.5" fill="none" stroke="#858d97" stroke-width="1.6"/></svg>
<svg style="left:12.5px;top:552.4px" width="25" height="25" viewBox="0 0 25 25"><circle cx="12.5" cy="12.5" r="11.5" fill="none" stroke="#858d97" stroke-width="1.650"/><circle cx="12.5" cy="9.6" r="4" fill="none" stroke="#858d97" stroke-width="1.650"/><path d="M4.6 20.6 Q6.4 14.6 12.5 14.6 Q18.600 14.600 20.400 20.600" fill="none" stroke="#858d97" stroke-width="1.650"/></svg>
<svg style="left:12px;top:603.6px" width="26" height="26" viewBox="0 0 26 26"><path d="M11.21 4.69 L11.32 0.51 L14.68 0.51 L14.79 4.69 L17.61 5.86 L20.64 2.98 L23.02 5.36 L20.14 8.39 L21.31 11.21 L25.49 11.32 L25.49 14.68 L21.31 14.79 L20.14 17.61 L23.02 20.64 L20.64 23.02 L17.61 20.14 L14.79 21.31 L14.68 25.49 L11.32 25.49 L11.21 21.31 L8.39 20.14 L5.36 23.02 L2.98 20.64 L5.86 17.61 L4.69 14.79 L0.51 14.68 L0.51 11.32 L4.69 11.21 L5.86 8.39 L2.98 5.36 L5.36 2.98 L8.39 5.86Z" fill="none" stroke="#858d97" stroke-width="1.65" stroke-linejoin="round"/><circle cx="13" cy="13" r="2.9" fill="none" stroke="#858d97" stroke-width="1.65"/></svg>
<svg style="left:93.3px;top:13.6px" width="12.500" height="12.500" viewBox="0 0 12 12"><path d="M5.9 .4 C3.6 .4 3.300 1.400 3.300 2.200 V3.400 H6 V3.900 H2.200 C.9 3.900 .400 5 .400 6 C.400 7.200 1 8.200 2.200 8.200 H3.200 V6.900 C3.200 5.900 4 5.300 4.900 5.300 H7.300 C8.100 5.300 8.700 4.700 8.700 3.900 V2.200 C8.700 1.100 7.700 .400 5.900 .400Z" fill="#4b8bbe"/><path d="M6.100 11.600 C8.400 11.600 8.700 10.600 8.700 9.800 V8.600 H6 V8.100 H9.800 C11.100 8.100 11.600 7 11.600 6 C11.600 4.800 11 3.800 9.800 3.800 H8.800 V5.100 C8.800 6.100 8 6.700 7.100 6.700 H4.700 C3.900 6.700 3.300 7.300 3.300 8.100 V9.800 C3.300 10.900 4.300 11.600 6.100 11.600Z" fill="#6aa7c8"/></svg>
<svg style="left:222.3px;top:15px" width="13" height="11" viewBox="0 0 13 11"><path d="M7.6 2.600 A3.900 3.900 0 1 0 7.600 8.400" fill="none" stroke="#6b9fc4" stroke-width="2.500"/><path d="M8.600 5.500 H12.600 M9.600 4.500 V6.500 M11.700 4.500 V6.500" stroke="#6b9fc4" stroke-width="1.500" fill="none"/></svg>
<svg style="left:350.8px;top:15px" width="13" height="11" viewBox="0 0 13 11"><path d="M7.6 2.600 A3.900 3.900 0 1 0 7.600 8.400" fill="none" stroke="#6b9fc4" stroke-width="2.500"/><path d="M8.600 5.500 H12.600 M9.600 4.500 V6.500 M11.700 4.500 V6.500" stroke="#6b9fc4" stroke-width="1.500" fill="none"/></svg>
<svg style="left:479.3px;top:15px" width="13" height="11" viewBox="0 0 13 11"><path d="M7.6 2.600 A3.900 3.900 0 1 0 7.600 8.400" fill="none" stroke="#6b9fc4" stroke-width="2.500"/><path d="M8.600 5.500 H12.600 M9.600 4.500 V6.500 M11.700 4.500 V6.500" stroke="#6b9fc4" stroke-width="1.500" fill="none"/></svg>
<svg style="left:600px;top:10px" width="18" height="19" viewBox="0 0 18 19"><path d="M5.600 7 V1.200 L16.800 8 L9.500 12.600" fill="none" stroke="#c9d1d9" stroke-width="1.2" stroke-linejoin="round"/><ellipse cx="5" cy="13.400" rx="2.300" ry="3" fill="none" stroke="#c9d1d9" stroke-width="1.1"/><path d="M3.200 10.800 Q5 9 6.800 10.800 M.4 11.200 L2.700 12.200 M.3 14 H2.700 M.6 17 L2.900 15.600 M9.600 11.200 L7.300 12.200 M9.700 14 H7.300 M9.400 17 L7.100 15.600" fill="none" stroke="#c9d1d9" stroke-width="1"/></svg>
<svg style="left:621px;top:17px" width="8" height="5" viewBox="0 0 8 5"><path d="M.5 .6 L4 4.100 L7.500 .6" fill="none" stroke="#c9d1d9" stroke-width="1"/></svg>
<svg style="left:641.5px;top:10.5px" width="17" height="17" viewBox="0 0 17 17"><path d="M7.23 2.84 L7.52 0.76 L9.48 0.76 L9.77 2.84 L11.61 3.60 L13.28 2.34 L14.66 3.72 L13.40 5.39 L14.16 7.23 L16.24 7.52 L16.24 9.48 L14.16 9.77 L13.40 11.61 L14.66 13.28 L13.28 14.66 L11.61 13.40 L9.77 14.16 L9.48 16.24 L7.52 16.24 L7.23 14.16 L5.39 13.40 L3.72 14.66 L2.34 13.28 L3.60 11.61 L2.84 9.77 L0.76 9.48 L0.76 7.52 L2.84 7.23 L3.60 5.39 L2.34 3.72 L3.72 2.34 L5.39 3.60Z" fill="none" stroke="#c9d1d9" stroke-width="1.1" stroke-linejoin="round"/><circle cx="8.5" cy="8.5" r="2.1" fill="none" stroke="#c9d1d9" stroke-width="1.1"/></svg>
<svg style="left:671px;top:11.5px" width="15" height="15" viewBox="0 0 15 15"><rect x=".7" y=".7" width="13.600" height="13.600" rx="1.300" fill="none" stroke="#c9d1d9" stroke-width="1.200"/><path d="M7.500 .7 V14.300" stroke="#c9d1d9" stroke-width="1.200"/></svg>
<div class="abs" style="left:699.5px;top:18px;width:2.200px;height:2.200px;border-radius:50%;background:#c9d1d9;box-shadow:5px 0 0 #c9d1d9,10px 0 0 #c9d1d9"></div>
<svg style="left:461.8px;top:439.2px" width="14.800" height="14.800" viewBox="0 0 14 14"><rect x=".6" y=".6" width="12.800" height="12.800" rx="1.600" fill="none" stroke="#c9d1d9" stroke-width="1.100"/><path d="M4.600 4 L8 7 L4.600 10" fill="none" stroke="#c9d1d9" stroke-width="1.100"/></svg>
<svg style="left:581.5px;top:439.500px" width="13" height="13" viewBox="0 0 13 13"><path d="M6.500 0 V13 M0 6.500 H13" stroke="#c9d1d9" stroke-width="1.200" fill="none"/></svg>
<svg style="left:602px;top:444.500px" width="8" height="5" viewBox="0 0 8 5"><path d="M.5 .6 L4 4.100 L7.500 .6" fill="none" stroke="#c9d1d9" stroke-width="1"/></svg>
<svg style="left:624px;top:439.500px" width="14" height="14" viewBox="0 0 14 14"><rect x=".6" y=".6" width="12.800" height="12.800" rx="1.300" fill="none" stroke="#c9d1d9" stroke-width="1.200"/><path d="M7 .6 V13.400" stroke="#c9d1d9" stroke-width="1.200"/></svg>
<svg style="left:652px;top:439px" width="12" height="14" viewBox="0 0 12 14"><path d="M.4 3 H11.600 M4 3 V1 H8 V3 M1.700 3 L2.300 13.300 H9.700 L10.300 3" fill="none" stroke="#c9d1d9" stroke-width="1.100"/><path d="M4.300 5 V11.500 M6 5 V11.500 M7.700 5 V11.500" stroke="#c9d1d9" stroke-width="1" fill="none"/></svg>
<svg style="left:681px;top:443.5px" width="10" height="6" viewBox="0 0 10 6"><path d="M.5 5.400 L5 .9 L9.500 5.400" fill="none" stroke="#9aa2ab" stroke-width="1.100"/></svg>
<svg style="left:705.5px;top:442px" width="9" height="9" viewBox="0 0 9 9"><path d="M.5 .5 L8.500 8.500 M8.500 .5 L.5 8.500" fill="none" stroke="#9aa2ab" stroke-width="1.100"/></svg>
<svg style="left:12.5px;top:648.500px" width="11" height="12" viewBox="0 0 11 12"><path d="M.6 3.500 L5 7.700 L.6 11.800 M10.400 .4 L6.800 3.600 L10.400 6.800" fill="none" stroke="#d0d7de" stroke-width="1.150"/></svg>
<svg style="left:124.3px;top:648px" width="13" height="13" viewBox="0 0 13 13"><circle cx="6.500" cy="6.500" r="5.700" fill="none" stroke="#8b949e" stroke-width="1.100"/><path d="M4.200 4.200 L8.800 8.800 M8.800 4.200 L4.200 8.800" stroke="#8b949e" stroke-width="1.100"/></svg>
<svg style="left:154.700px;top:648.2px" width="14" height="13" viewBox="0 0 14 13"><path d="M7 1 L13.200 12 H.8Z" fill="none" stroke="#8b949e" stroke-width="1.100" stroke-linejoin="round"/><path d="M7 4.800 V8.600 M7 9.700 V10.800" stroke="#8b949e" stroke-width="1.100"/></svg>
<svg style="left:198.700px;top:648.2px" width="14" height="13" viewBox="0 0 14 13"><path d="M7 4.500 L4.200 12.500 M7 4.500 L9.800 12.500 M5.200 9.600 H8.800" fill="none" stroke="#8b949e" stroke-width="1"/><circle cx="7" cy="4.200" r="1" fill="#8b949e"/><path d="M4.600 1.800 Q3.400 4.200 4.600 6.600 M9.400 1.800 Q10.600 4.200 9.400 6.600 M2.600 .6 Q.6 4.200 2.600 7.800 M11.400 .6 Q13.400 4.200 11.400 7.800" fill="none" stroke="#8b949e" stroke-width="1"/></svg>
<svg style="left:667px;top:648.5px" width="14" height="13" viewBox="0 0 14 13"><circle cx="4.600" cy="4.400" r="2.300" fill="none" stroke="#8b949e" stroke-width="1.100"/><path d="M.8 12.400 Q1 7.800 4.600 7.800 Q6.600 7.800 7.400 9.400" fill="none" stroke="#8b949e" stroke-width="1.100"/><path d="M7.600 1 H13.200 V6.400 H10.600 L8.800 8 V6.400 H7.600Z" fill="none" stroke="#8b949e" stroke-width="1" stroke-linejoin="round"/></svg>
<svg style="left:700px;top:648px" width="12" height="14" viewBox="0 0 12 14"><path d="M1 10.600 H11 Q9.600 9.200 9.600 6 Q9.600 1.600 6 1.600 Q2.400 1.600 2.400 6 Q2.400 9.200 1 10.600Z" fill="none" stroke="#8b949e" stroke-width="1.100" stroke-linejoin="round"/><path d="M4.600 11.400 Q6 13.400 7.400 11.400" fill="none" stroke="#8b949e" stroke-width="1.100"/></svg>
<!--/ICONS-->
</div>
</div>

</body>
</html>
